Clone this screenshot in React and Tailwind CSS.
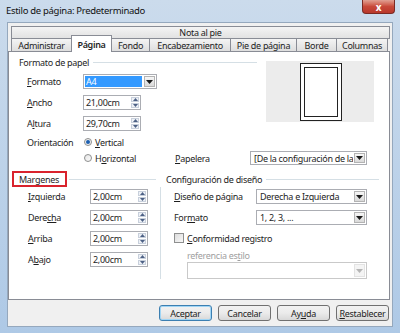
import React from 'react';

function Down({ disabled }) {
  return (
    <svg width="7" height="4" viewBox="0 0 7 4">
      <path d="M0 0 L7 0 L3.5 4 Z" fill={disabled ? '#b5b5b5' : '#1a1a1a'} />
    </svg>
  );
}

function Up() {
  return (
    <svg width="5" height="3" viewBox="0 0 5 3">
      <path d="M0 3 L5 3 L2.5 0 Z" fill="#4d6185" />
    </svg>
  );
}

function DownSmall() {
  return (
    <svg width="5" height="3" viewBox="0 0 5 3">
      <path d="M0 0 L5 0 L2.5 3 Z" fill="#4d6185" />
    </svg>
  );
}

function Combo({ className, text, highlight, disabled }) {
  return (
    <div className={`flex items-stretch border ${disabled ? 'border-[#c9c9c9]' : 'border-[#abadb3]'} bg-white ${className}`}>
      <div className="flex-1 overflow-hidden whitespace-nowrap flex items-center p-[1px]">
        {highlight ? (
          <span className="flex items-center h-full w-full bg-[#3399ff] text-white pl-[1px]">{text}</span>
        ) : (
          <span className="pl-[2px]">{text}</span>
        )}
      </div>
      <div className={`w-[11px] m-[1px] flex items-center justify-center border ${disabled ? 'border-[#e3e3e3] bg-[#f4f4f4]' : 'border-[#b3b3b3] bg-linear-to-b from-[#f6f6f6] to-[#d9d9d9]'}`}>
        <Down disabled={disabled} />
      </div>
    </div>
  );
}

function Spin({ value }) {
  return (
    <div className="flex items-center w-[58px] h-[15px] border border-[#abadb3] bg-white">
      <span className="flex-1 pl-[2px]">{value}</span>
      <div className="flex flex-col w-[8px] h-[11px] mr-[1px] gap-[1px]">
        <div className="flex-1 flex items-center justify-center border border-[#c8d0dc] bg-[#eef1f6]"><Up /></div>
        <div className="flex-1 flex items-center justify-center border border-[#c8d0dc] bg-[#eef1f6]"><DownSmall /></div>
      </div>
    </div>
  );
}

function Tab({ label, className, active }) {
  if (active) {
    return (
      <div className={`relative z-10 -mt-[3px] -mb-[1px] h-[17px] flex items-center justify-center bg-white border border-b-0 border-[#898c95] font-semibold ${className}`}>
        {label}
      </div>
    );
  }
  return (
    <div className={`h-[13px] flex items-center justify-center bg-linear-to-b from-[#f4f4f4] to-[#dedede] border border-b-0 border-[#898c95] -ml-px ${className}`}>
      {label}
    </div>
  );
}

function Btn({ children, primary }) {
  return (
    <div className={`w-[53px] h-[16px] flex items-center justify-center rounded-[3px] border ${primary ? 'border-[#3c7fb1] shadow-[inset_0_0_0_1px_#9fd5f5]' : 'border-[#707070]'} bg-linear-to-b from-[#f2f2f2] via-[#ebebeb] to-[#d8d8d8]`}>
      {children}
    </div>
  );
}

export default function App() {
  return (
    <div className="w-[400px] h-[333px] bg-linear-to-b from-[#cbdbec] to-[#aec9e6] flex flex-col font-['Noto_Sans',sans-serif] text-[9px] tracking-[-0.3px] text-[#1e1e1e] leading-none overflow-hidden">
      <div className="h-[22px] flex items-start">
        <span className="pl-[6px] pt-[6px] text-[9.5px] text-[#111]">Estilo de página: Predeterminado</span>
        <div className="ml-auto mr-[5px] w-[33px] h-[14px] rounded-b-[4px] border border-t-0 border-[#7a2a24] bg-linear-to-b from-[#e0a093] via-[#c8493a] to-[#b8382c] flex items-center justify-center text-white font-bold text-[10px]">
          x
        </div>
      </div>
      <div className="mx-[7px] h-[305px] border border-[#95a8bd] bg-[#f0f0f0] flex flex-col">
        <div className="pt-[3px] pl-[3px] pr-[2px] flex flex-col">
          <div className="h-[12px] flex items-center justify-center bg-linear-to-b from-[#f4f4f4] to-[#e2e2e2] border border-b-0 border-[#898c95]">Nota al pie</div>
          <div className="flex items-end border-t border-[#898c95] h-[13px]">
            <Tab label="Administrar" className="w-[61px] ml-0" />
            <Tab label="Página" className="w-[41px] -ml-px" active />
            <Tab label="Fondo" className="w-[39px]" />
            <Tab label="Encabezamiento" className="w-[82px]" />
            <Tab label="Pie de página" className="w-[67px]" />
            <Tab label="Borde" className="w-[41px]" />
            <Tab label="Columnas" className="w-[52px]" />
          </div>
        </div>
        <div className="ml-[0px] w-[382px] h-[249px] bg-white border border-[#898c95] flex flex-col">
          <div className="flex">
            <div className="w-[248px] flex flex-col">
              <div className="mt-[3px] h-[14px] flex items-center">
                <span className="ml-[10px]">Formato de papel</span>
                <div className="flex-1 h-px bg-[#d5dfe5] ml-[4px]" />
              </div>
              <div className="mt-[5px] h-[15px] flex items-center">
                <span className="ml-[18px] w-[56px]"><span className="underline">F</span>ormato</span>
                <Combo className="w-[74px] h-[15px]" text="A4" highlight />
              </div>
              <div className="mt-[6px] h-[15px] flex items-center">
                <span className="ml-[18px] w-[56px]"><span className="underline">A</span>ncho</span>
                <Spin value="21,00cm" />
              </div>
              <div className="mt-[6px] h-[15px] flex items-center">
                <span className="ml-[18px] w-[56px]">A<span className="underline">l</span>tura</span>
                <Spin value="29,70cm" />
              </div>
            </div>
            <div className="ml-[9px] mt-[9px] w-[108px] h-[61px] bg-[#ececec] flex pt-[2px] pl-[34px]">
              <div className="w-[42px] h-[58px] bg-white border border-[#222] p-[3px]">
                <div className="w-full h-full border border-[#222]" />
              </div>
            </div>
          </div>
          <div className="mt-[4px] h-[14px] flex items-center">
            <span className="ml-[18px] w-[57px]">Orientación</span>
            <div className="w-[8px] h-[8px] rounded-full border border-[#8e8f8f] bg-[#f2f2f2] flex items-center justify-center">
              <div className="w-[4px] h-[4px] rounded-full bg-[#1c5fb0]" />
            </div>
            <span className="ml-[3px]"><span className="underline">V</span>ertical</span>
          </div>
          <div className="mt-[2px] h-[14px] flex items-center">
            <div className="w-[166px] flex items-center pl-[75px]">
              <div className="w-[8px] h-[8px] rounded-full border border-[#8e8f8f] bg-linear-to-br from-[#e6e6e6] to-[#fafafa]" />
              <span className="ml-[3px]">H<span className="underline">o</span>rizontal</span>
            </div>
            <span className="w-[75px]"><span className="underline">P</span>apelera</span>
            <Combo className="w-[117px] h-[14px]" text="[De la configuración de la im" />
          </div>
          <div className="mt-[6px] flex">
            <div className="w-[152px] flex flex-col">
              <div className="h-[16px] flex items-center">
                <div className="ml-[3px] w-[55px] h-[16px] border-2 border-[#d9232d] flex items-center pl-[5px]">Margenes</div>
                <div className="flex-1 h-px bg-[#d5dfe5] ml-[2px] mr-[5px]" />
              </div>
              <div className="h-[92px] border-r border-[#d5dfe5] flex flex-col pt-[2px]">
                {[
                  [<><span className="underline">I</span>zquierda</>, '2,00cm'],
                  [<>Dere<span className="underline">ch</span>a</>, '2,00cm'],
                  [<><span className="underline">A</span>rriba</>, '2,00cm'],
                  [<>A<span className="underline">b</span>ajo</>, '2,00cm'],
                ].map(([l, v], i) => (
                  <div key={i} className={`h-[15px] flex items-center ${i > 0 ? 'mt-[6px]' : ''}`}>
                    <span className="ml-[19px] w-[62px]">{l}</span>
                    <Spin value={v} />
                  </div>
                ))}
              </div>
            </div>
            <div className="flex-1 flex flex-col">
              <div className="h-[16px] flex items-center">
                <span className="ml-[5px]">Configuración de diseño</span>
                <div className="flex-1 h-px bg-[#d5dfe5] ml-[4px] mr-[10px]" />
              </div>
              <div className="mt-[2px] h-[15px] flex items-center">
                <span className="ml-[13px] w-[82px]"><span className="underline">D</span>iseño de página</span>
                <Combo className="w-[111px] h-[15px]" text="Derecha e Izquierda" />
              </div>
              <div className="mt-[6px] h-[15px] flex items-center">
                <span className="ml-[13px] w-[82px]">For<span className="underline">m</span>ato</span>
                <Combo className="w-[111px] h-[15px]" text="1, 2, 3, ..." />
              </div>
              <div className="mt-[7px] h-[12px] flex items-center">
                <div className="ml-[13px] w-[10px] h-[10px] border border-[#8e8f8f] bg-linear-to-br from-[#dcdcdc] to-[#f8f8f8]" />
                <span className="ml-[3px]"><span className="underline">C</span>onformidad registro</span>
              </div>
              <div className="mt-[5px] h-[12px] flex items-center">
                <span className="ml-[26px] text-[#a0a0a0]">referencia es<span className="underline">t</span>ilo</span>
              </div>
              <div className="mt-[1px] ml-[26px]">
                <Combo className="w-[180px] h-[17px]" text="" disabled />
              </div>
            </div>
          </div>
        </div>
        <div className="mt-[5px] flex justify-end gap-[6px] pr-[3px]">
          <Btn primary>Aceptar</Btn>
          <Btn>Cancelar</Btn>
          <Btn>Ay<span className="underline">u</span>da</Btn>
          <Btn><span className="underline">R</span>establecer</Btn>
        </div>
      </div>
    </div>
  );
}
